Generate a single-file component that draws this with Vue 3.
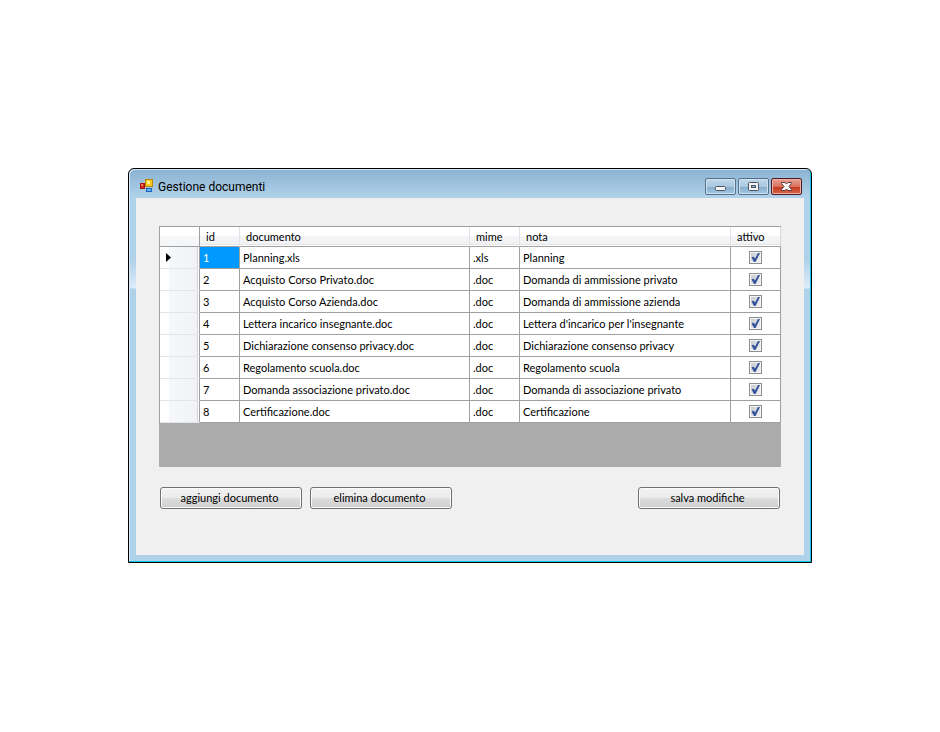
<template>
  <main class="desktop">
    <section class="window" aria-labelledby="window-title">
      <header class="title-bar">
        <svg class="app-icon" width="14" height="14" viewBox="0 0 14 14" aria-hidden="true">
          <rect x="0" y="4" width="5" height="6" fill="#a3160f" />
          <rect x="1" y="5" width="3" height="4" fill="#d8281c" />
          <rect x="1" y="5" width="2" height="2" fill="#f47a62" />
          <rect x="5" y="0" width="8" height="8" fill="#b8860b" />
          <rect x="6" y="1" width="6" height="6" fill="#fcc81c" />
          <rect x="7" y="2" width="3" height="3" fill="#ffec8a" />
          <rect x="6" y="9" width="6" height="4" fill="#1b5fc0" />
          <rect x="7" y="10" width="4" height="2" fill="#62b4f4" />
        </svg>
        <h1 id="window-title">Gestione documenti</h1>
        <div class="window-controls">
          <button type="button" class="control" aria-label="Riduci a icona">
            <svg width="29" height="15" viewBox="0 0 29 15" aria-hidden="true">
              <rect x="9.5" y="7.5" width="10" height="4" rx="1" fill="#f4f4f4" stroke="#4c5565" />
            </svg>
          </button>
          <button type="button" class="control" aria-label="Ingrandisci">
            <svg width="29" height="15" viewBox="0 0 29 15" aria-hidden="true">
              <rect x="9.5" y="3.5" width="10" height="8" rx="1" fill="#f4f4f4" stroke="#4c5565" />
              <rect x="12.5" y="6.5" width="4" height="2" fill="#8db4d6" stroke="#4c5565" />
            </svg>
          </button>
          <button type="button" class="control close" aria-label="Chiudi">
            <svg width="29" height="15" viewBox="0 0 29 15" aria-hidden="true">
              <path
                d="M9.5 3.5h3.500l1.500 1.500 1.500-1.500h3.500v1l-2.500 3 2.500 3v1h-3.500l-1.500-1.500-1.500 1.500h-3.500v-1l2.500-3-2.500-3z"
                fill="#f6f6f6"
                stroke="#5d3a40"
              />
            </svg>
          </button>
        </div>
      </header>

      <div class="client">
        <div class="grid">
          <table>
            <colgroup>
              <col class="col-header" />
              <col class="col-id" />
              <col class="col-documento" />
              <col class="col-mime" />
              <col />
              <col class="col-attivo" />
            </colgroup>
            <thead>
              <tr>
                <td class="corner"></td>
                <th v-for="column in columns" :key="column" scope="col">{{ column }}</th>
              </tr>
            </thead>
            <tbody>
              <tr v-for="row in rows" :key="row.id" @click="selectedId = row.id">
                <td class="row-header">
                  <svg v-if="row.id === selectedId" width="5" height="9" viewBox="0 0 5 9" aria-hidden="true">
                    <path d="M0 0 5 4.5 0 9z" fill="#000" />
                  </svg>
                </td>
                <td :class="{ selected: row.id === selectedId }">{{ row.id }}</td>
                <td>{{ row.documento }}</td>
                <td>{{ row.mime }}</td>
                <td>{{ row.nota }}</td>
                <td class="check-cell">
                  <label class="check">
                    <input v-model="row.attivo" type="checkbox" :aria-label="'attivo ' + row.id" />
                    <svg v-if="row.attivo" width="13" height="13" viewBox="0 0 13 13" aria-hidden="true">
                      <path d="M2.5 6.500 4.500 5.500 6 7.500 9 2h2L6.500 11H5z" fill="#33539c" />
                    </svg>
                  </label>
                </td>
              </tr>
            </tbody>
          </table>
        </div>

        <div class="actions">
          <button type="button" class="action">aggiungi documento</button>
          <button type="button" class="action">elimina documento</button>
          <button type="button" class="action save">salva modifiche</button>
        </div>
      </div>
    </section>
  </main>
</template>

<script setup>
import { ref } from 'vue'

const columns = ['id', 'documento', 'mime', 'nota', 'attivo']

const selectedId = ref(1)

const rows = ref([
  { id: 1, documento: 'Planning.xls', mime: '.xls', nota: 'Planning', attivo: true },
  { id: 2, documento: 'Acquisto Corso Privato.doc', mime: '.doc', nota: 'Domanda di ammissione privato', attivo: true },
  { id: 3, documento: 'Acquisto Corso Azienda.doc', mime: '.doc', nota: 'Domanda di ammissione azienda', attivo: true },
  { id: 4, documento: 'Lettera incarico insegnante.doc', mime: '.doc', nota: "Lettera d'incarico per l'insegnante", attivo: true },
  { id: 5, documento: 'Dichiarazione consenso privacy.doc', mime: '.doc', nota: 'Dichiarazione consenso privacy', attivo: true },
  { id: 6, documento: 'Regolamento scuola.doc', mime: '.doc', nota: 'Regolamento scuola', attivo: true },
  { id: 7, documento: 'Domanda associazione privato.doc', mime: '.doc', nota: 'Domanda di associazione privato', attivo: true },
  { id: 8, documento: 'Certificazione.doc', mime: '.doc', nota: 'Certificazione', attivo: true }
])
</script>

<style>
body {
  margin: 0;
  background: #fff;
}
</style>

<style scoped>
.desktop {
  box-sizing: border-box;
  min-height: 100vh;
  padding: 168px 128px;
  font-family: Lato, "Liberation Sans", Arial, sans-serif;
  font-size: 11px;
  color: #000;
}

.window {
  border: 1px solid #000;
  border-radius: 6px 6px 0 0;
  padding: 0 6px 6px;
  background: linear-gradient(#8ab2d0 0, #b0d1ea 28px, #b0d1ea 90px, #dcebf8 119px, #b0d1ea 120px);
  box-shadow: inset -1px -1px 0 #12c8e8, inset 1px 1px 0 #d5e6f4;
}

.title-bar {
  display: flex;
  align-items: center;
  height: 29px;
  padding: 0 3px 0 5px;
}

.app-icon {
  margin: 5px 4px 0 0;
}

h1 {
  flex: 1;
  margin: 6px 0 0;
  font: 12px/16px Roboto, "Segoe UI", sans-serif;
}

.window-controls {
  display: flex;
  gap: 2px;
  margin-top: 6px;
}

.control {
  width: 31px;
  height: 17px;
  padding: 0;
  border: 1px solid #56708c;
  border-radius: 2px;
  background: linear-gradient(#c0d7ea 0, #a9c8e0 50%, #84abcb 50%, #a5c8e2 100%);
  box-shadow: inset 0 0 0 1px #cfe2f2;
}

.control svg {
  display: block;
}

.close {
  border-color: #4f1a22;
  background: linear-gradient(#e9a296 0, #d9705c 50%, #c3351c 50%, #d9664a 100%);
  box-shadow: inset 0 0 0 1px #eab0a5;
}

.client {
  margin: 0 1px 1px;
  padding: 28px 23px 46px;
  background: #f0f0f0;
}

.grid {
  min-height: 241px;
  background: #ababab;
}

table {
  width: 100%;
  table-layout: fixed;
  border-spacing: 0;
  border-left: 1px solid #a0a0a0;
  border-top: 1px solid #a0a0a0;
}

.col-header,
.col-id {
  width: 40px;
}

.col-documento {
  width: 230px;
}

.col-mime,
.col-attivo {
  width: 50px;
}

th,
td {
  box-sizing: border-box;
  height: 22px;
  padding: 0 3px;
  border-right: 1px solid #a0a0a0;
  border-bottom: 1px solid #a0a0a0;
  background: #fff;
  font-weight: normal;
  text-align: left;
  white-space: nowrap;
}

th,
.corner {
  height: 20px;
}

th {
  padding: 0 6px;
  border-right-color: #e0e3e8;
  background: linear-gradient(#fff 0, #fff 45%, #f4f5f7 45%, #f1f2f4 90%, #d5d5d5 95%, #fff 95%);
}

th:last-child {
  border-right-color: #d5d5d5;
}

.corner {
  background: linear-gradient(#fff 0, #fff 45%, #f7f8fa 45%, #f4f5f7 100%);
}

.row-header {
  padding: 0 6px;
  border-bottom-color: #e4e5e8;
  background: linear-gradient(to right, #fff 0, #fff 9px, #f7f8fa 9px, #f1f2f5 37px, #d5d5d5 37px, #d5d5d5 38px, #fff 38px);
}

.row-header svg {
  display: block;
}

.selected {
  background: #0099ff;
  color: #fff;
}

.check-cell {
  padding: 0;
}

.check {
  display: grid;
  width: 13px;
  margin: 0 auto;
}

.check input,
.check svg {
  grid-area: 1 / 1;
}

.check input {
  appearance: none;
  box-sizing: border-box;
  width: 13px;
  height: 13px;
  margin: 0;
  border: 1px solid #8e8f8f;
  background: linear-gradient(135deg, #c4c9d0, #f4f4f4);
  box-shadow: inset 0 0 0 1px #f4f4f4;
}

.check svg {
  pointer-events: none;
}

.actions {
  display: flex;
  gap: 8px;
  margin: 20px 1px 0;
}

.action {
  width: 142px;
  height: 22px;
  padding: 0 3px 1px 0;
  border: 1px solid #707070;
  border-radius: 3px;
  background: linear-gradient(#f2f2f2 0, #ebebeb 50%, #dddddd 50%, #cfcfcf 100%);
  box-shadow: inset 0 0 0 1px #fbfbfb;
  font: inherit;
  color: #000;
}

.save {
  margin-left: auto;
}
</style>
